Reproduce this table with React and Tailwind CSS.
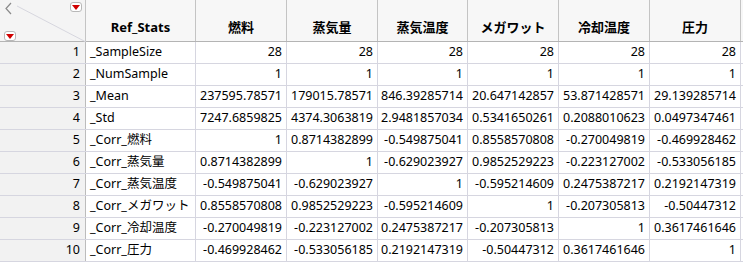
import React from 'react';

const cols = ['燃料', '蒸気量', '蒸気温度', 'メガワット', '冷却温度', '圧力'];

const rows = [
  ['_SampleSize', '28', '28', '28', '28', '28', '28'],
  ['_NumSample', '1', '1', '1', '1', '1', '1'],
  ['_Mean', '237595.78571', '179015.78571', '846.39285714', '20.647142857', '53.871428571', '29.139285714'],
  ['_Std', '7247.6859825', '4374.3063819', '2.9481857034', '0.5341650261', '0.2088010623', '0.0497347461'],
  ['_Corr_燃料', '1', '0.8714382899', '-0.549875041', '0.8558570808', '-0.270049819', '-0.469928462'],
  ['_Corr_蒸気量', '0.8714382899', '1', '-0.629023927', '0.9852529223', '-0.223127002', '-0.533056185'],
  ['_Corr_蒸気温度', '-0.549875041', '-0.629023927', '1', '-0.595214609', '0.2475387217', '0.2192147319'],
  ['_Corr_メガワット', '0.8558570808', '0.9852529223', '-0.595214609', '1', '-0.207305813', '-0.50447312'],
  ['_Corr_冷却温度', '-0.270049819', '-0.223127002', '0.2475387217', '-0.207305813', '1', '0.3617461646'],
  ['_Corr_圧力', '-0.469928462', '-0.533056185', '0.2192147319', '-0.50447312', '0.3617461646', '1'],
];

const widths = ['w-[91px]', 'w-[91px]', 'w-[90px]', 'w-[91px]', 'w-[91px]', 'w-[91px]'];

const RedButton = () => (
  <div className="w-[12px] h-[10px] bg-white border border-[#b8b8b8] rounded-[3px] flex items-center justify-center">
    <svg width="8" height="5" viewBox="0 0 8 5">
      <polygon points="0,0 8,0 4,5" fill="#d00000" />
    </svg>
  </div>
);

export default function App() {
  return (
    <div
      className="w-[743px] h-[264px] bg-white overflow-hidden text-[12.5px] text-black"
      style={{ fontFamily: '"Noto Sans", "Noto Sans CJK JP", sans-serif' }}
    >
      {/* Header */}
      <div className="flex h-[42px] bg-[#f7f7f7] border-b border-[#b4b4b4] text-[13px]">
        <div className="relative w-[86px] shrink-0 border-r border-[#c4c4c4] bg-[#f4f4f4]">
          <svg className="absolute left-0 top-0" width="86" height="42" viewBox="0 0 86 42">
            <line x1="17" y1="6" x2="86" y2="42" stroke="#d6d6de" strokeWidth="1" />
            <polyline points="11,3 6,8.5 11,14" fill="none" stroke="#8a8a8a" strokeWidth="1.2" />
          </svg>
          <div className="absolute left-[70px] top-[2px]"><RedButton /></div>
          <div className="absolute left-[4px] top-[31px]"><RedButton /></div>
        </div>
        <div className="w-[110px] shrink-0 border-r border-[#c4c4c4] flex items-end justify-center pb-[4px] font-bold">
          Ref_Stats
        </div>
        {cols.map((c, i) => (
          <div
            key={c}
            className={`${widths[i]} shrink-0 border-r border-[#c4c4c4] flex items-end justify-center pb-[4px] font-bold`}
          >
            {c}
          </div>
        ))}
      </div>

      {/* Rows */}
      {rows.map((r, ri) => (
        <div key={ri} className="flex h-[22px] border-b border-[#d6d6e0]">
          <div className="w-[86px] shrink-0 bg-[#f2f2f2] border-r border-[#bcbcbc] flex items-center justify-end pr-[5px]">
            {ri + 1}
          </div>
          <div className="w-[110px] shrink-0 border-r border-[#d6d6e0] flex items-center pl-[4px] whitespace-nowrap overflow-hidden">
            {r[0]}
          </div>
          {r.slice(1).map((v, ci) => (
            <div
              key={ci}
              className={`${widths[ci]} shrink-0 border-r border-[#d6d6e0] flex items-center justify-end pr-[4px] whitespace-nowrap overflow-hidden`}
            >
              {v}
            </div>
          ))}
        </div>
      ))}
    </div>
  );
}
